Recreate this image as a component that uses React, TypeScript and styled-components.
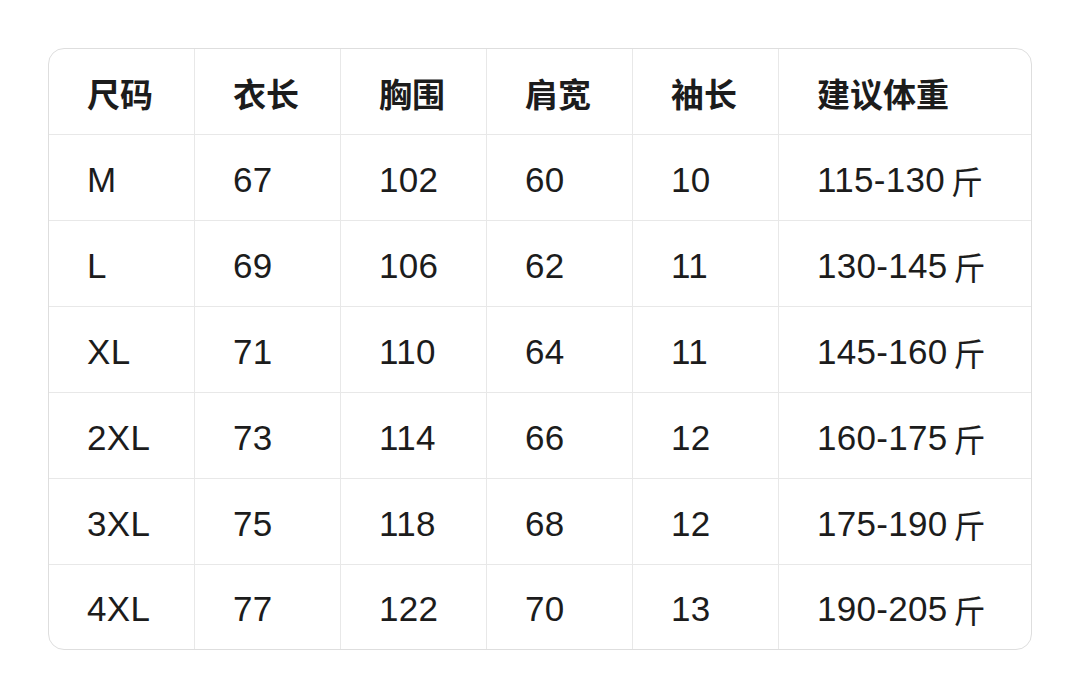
import React from 'react';
import styled, { createGlobalStyle } from 'styled-components';

const GlobalStyle = createGlobalStyle`
  html, body {
    margin: 0;
    padding: 0;
    background: #ffffff;
  }
  body {
    font-family: "Liberation Sans", "Noto Sans CJK SC", sans-serif;
    color: #1c1c1c;
  }
`;

const Page = styled.div`
  width: 1080px;
  height: 681px;
  padding: 48px 0 0 48px;
  box-sizing: border-box;
`;

const Table = styled.div`
  width: 984px;
  box-sizing: border-box;
  border: 1px solid #dedede;
  border-radius: 16px;
  overflow: hidden;
  display: grid;
  grid-template-columns: repeat(5, 146px) 252px;
  grid-template-rows: repeat(6, 86px) 84px;
`;

const Cell = styled.div<{ $lastCol: boolean; $lastRow: boolean; $head: boolean }>`
  box-sizing: border-box;
  display: flex;
  align-items: center;
  padding-left: 38px;
  padding-top: ${p => (p.$head ? '3px' : '4px')};
  border-right: ${p => (p.$lastCol ? 'none' : '1px solid #e8e8e8')};
  border-bottom: ${p => (p.$lastRow ? 'none' : '1px solid #e8e8e8')};
  font-size: ${p => (p.$head ? '33px' : '35px')};
  font-weight: ${p => (p.$head ? 600 : 400)};
  letter-spacing: ${p => (p.$head ? '0' : '0.3px')};
  font-family: ${p =>
    p.$head ? '"Noto Sans CJK SC", sans-serif' : '"Liberation Sans", "Noto Sans CJK SC", sans-serif'};
  color: #1c1c1c;
  white-space: nowrap;
`;

const Unit = styled.span`
  font-family: "Noto Sans CJK SC", sans-serif;
  font-size: 32px;
  margin-left: 6px;
`;

const headers = ['尺码', '衣长', '胸围', '肩宽', '袖长', '建议体重'];

const rows = [
  ['M', '67', '102', '60', '10', '115-130'],
  ['L', '69', '106', '62', '11', '130-145'],
  ['XL', '71', '110', '64', '11', '145-160'],
  ['2XL', '73', '114', '66', '12', '160-175'],
  ['3XL', '75', '118', '68', '12', '175-190'],
  ['4XL', '77', '122', '70', '13', '190-205'],
];

export default function App() {
  return (
    <>
      <GlobalStyle />
      <Page>
        <Table>
          {headers.map((h, i) => (
            <Cell key={h} $head $lastCol={i === headers.length - 1} $lastRow={false}>
              {h}
            </Cell>
          ))}
          {rows.map((row, r) =>
            row.map((v, c) => (
              <Cell
                key={r + '-' + c}
                $head={false}
                $lastCol={c === row.length - 1}
                $lastRow={r === rows.length - 1}
              >
                {v}
                {c === row.length - 1 && <Unit>斤</Unit>}
              </Cell>
            ))
          )}
        </Table>
      </Page>
    </>
  );
}
